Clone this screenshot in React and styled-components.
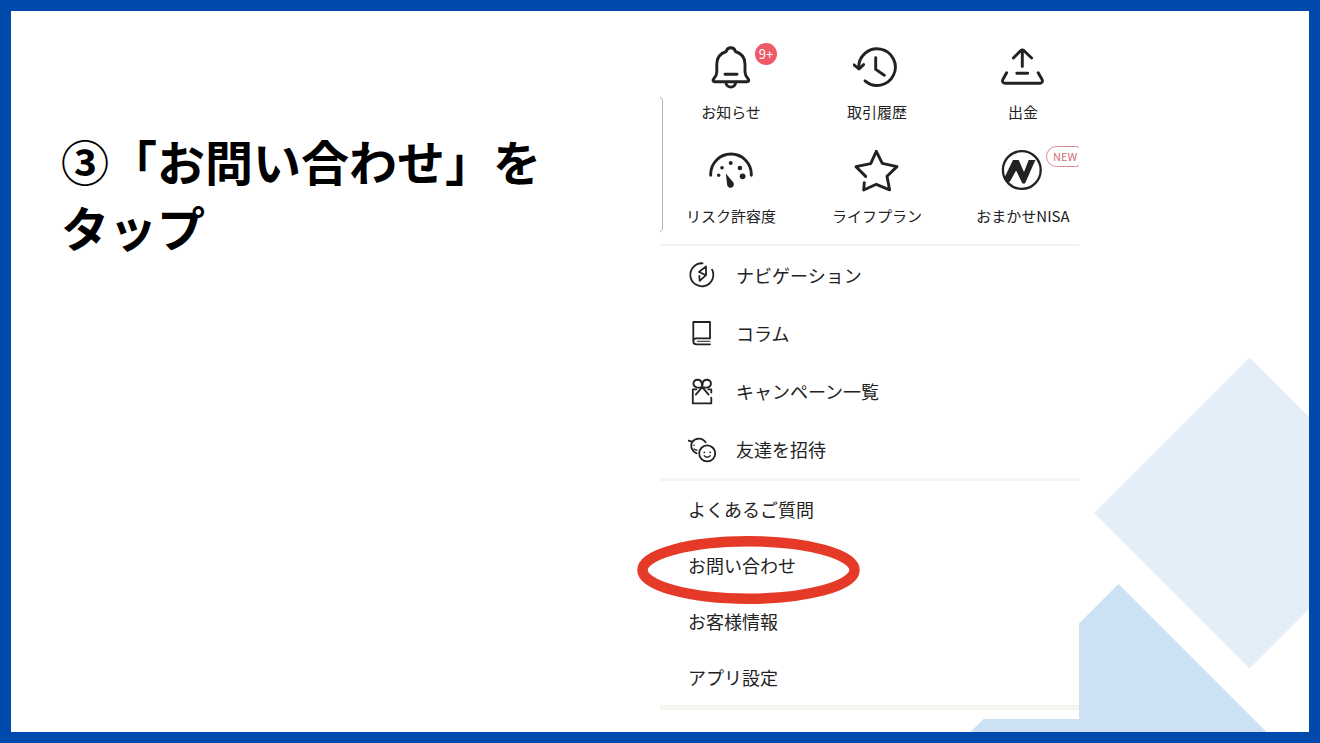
import React from "react";
import styled, { createGlobalStyle } from "styled-components";

const GlobalStyle = createGlobalStyle`
  *, *::before, *::after { box-sizing: border-box; }
  body {
    margin: 0;
    background: #ffffff;
    color: #222222;
    font-family: "Noto Sans CJK JP", "Noto Sans", sans-serif;
  }
`;

const Slide = styled.main`
  position: relative;
  display: grid;
  grid-template-columns: 1fr 1fr;
  min-height: 100vh;
  border: 11px solid #004aad;
  background: #ffffff;
  overflow: hidden;
`;

const Decoration = styled.svg`
  position: absolute;
  right: 0;
  bottom: 0;
  width: 340px;
  height: 375px;
`;

const Intro = styled.section`
  padding: 116px 40px 0 50px;
`;

const Title = styled.h1`
  margin: 0;
  max-width: 500px;
  color: #000000;
  font-size: 48px;
  font-weight: 700;
  line-height: 66px;
`;

const MenuPanel = styled.section`
  position: relative;
  align-self: start;
  width: 100%;
  max-width: 419px;
  padding-bottom: 9px;
  background: #ffffff;
`;

const Shortcuts = styled.div`
  position: relative;
  overflow: hidden;
  padding: 32px 0 17px;
`;

const NeighbourCard = styled.div`
  position: absolute;
  top: 85px;
  left: -10px;
  width: 13px;
  height: 137px;
  border: 1px solid #b4b4b4;
  border-radius: 5px;
`;

const ShortcutGrid = styled.div`
  display: grid;
  grid-template-columns: repeat(3, 146px);
  row-gap: 24px;
  margin-left: -2px;
`;

const Shortcut = styled.button`
  display: flex;
  flex-direction: column;
  align-items: center;
  gap: 10px;
  padding: 0;
  border: 0;
  background: none;
  color: inherit;
  font-family: inherit;
  font-size: 15px;
  line-height: 22px;
  white-space: nowrap;
  cursor: pointer;
`;

const ShortcutIcon = styled.span`
  position: relative;
  width: 48px;
  height: 48px;
`;

const CountBadge = styled.span`
  position: absolute;
  top: 0;
  left: 48px;
  width: 22px;
  height: 22px;
  border-radius: 50%;
  background: #ef5a68;
  color: #ffffff;
  font-size: 13px;
  line-height: 22px;
  text-align: center;
`;

const NewBadge = styled.span`
  position: absolute;
  top: -1px;
  left: 47px;
  padding: 0 8px 0 6px;
  border: 1px solid #d98a90;
  border-radius: 11px;
  color: #cf7078;
  font-size: 11px;
  line-height: 19px;
`;

const Divider = styled.hr`
  height: ${({ $size }) => $size}px;
  margin: 0;
  border: 0;
  background: ${({ $color }) => $color};
`;

const MenuList = styled.ul`
  margin: 0;
  padding: 0;
  list-style: none;
`;

const MenuItem = styled.li`
  position: relative;
  padding-left: 28px;
`;

const MenuLink = styled.a`
  display: flex;
  align-items: center;
  gap: 20px;
  height: ${({ $height }) => $height}px;
  color: inherit;
  font-size: 18px;
  line-height: 28px;
  text-decoration: none;
`;

const Highlight = styled.svg`
  position: absolute;
  top: -1px;
  left: -23px;
  width: 223px;
  height: 68px;
  pointer-events: none;
`;

const LineIcon = styled.svg`
  display: block;
  flex: none;
  width: ${({ $size }) => $size}px;
  height: ${({ $size }) => $size}px;
  fill: none;
  stroke: #222222;
  stroke-width: ${({ $stroke }) => $stroke};
  stroke-linecap: round;
  stroke-linejoin: round;

  .solid {
    fill: #222222;
    stroke: none;
  }
`;

const LargeIcon = ({ children }) => (
  <LineIcon $size={48} $stroke={2.9} viewBox="0 0 48 48" aria-hidden="true">
    {children}
  </LineIcon>
);

const SmallIcon = ({ children }) => (
  <LineIcon $size={28} $stroke={1.8} viewBox="0 0 28 28" aria-hidden="true">
    {children}
  </LineIcon>
);

const shortcuts = [
  {
    label: "お知らせ",
    badge: <CountBadge>9+</CountBadge>,
    icon: (
      <>
        <path d="M19.2 8.5A4.7 4.7 0 0 1 28.4 8.5C34.5 10.4 38 15 38 21V29C38 32 39.3 33.8 41.2 36C42.4 37.5 41.7 38.7 40 38.7H7.8C6.1 38.7 5.4 37.5 6.6 36C8.5 33.8 9.8 32 9.8 29V21C9.8 15 13.2 10.4 19.2 8.5Z" />
        <path d="M19 39.5A4.8 4.6 0 0 0 28.6 39.5M18 31.3H30" />
      </>
    ),
  },
  {
    label: "取引履歴",
    icon: (
      <>
        <path d="M5.8 25.4A18.3 18.3 0 1 1 12 37.9" />
        <path d="M.9 21.8L6 26L10.6 21.6M22.7 14.8V26.4L31.3 32.3" />
      </>
    ),
  },
  {
    label: "出金",
    icon: (
      <>
        <path d="M23.3 7V23.6M14.4 15L21.6 7.7Q23.3 6.2 25 7.7L32.6 15" />
        <path d="M17.8 30.3H28.7M7.6 29.8L4 36.2C2.8 38.5 4 40.3 6.2 40.3H40.8C43 40.3 44.1 38.5 42.9 36.2L39.2 29.8" />
      </>
    ),
  },
  {
    label: "リスク許容度",
    icon: (
      <>
        <path d="M3.7 28.3V27.3A20.3 20.3 0 0 1 44.3 27.3V28.3" />
        <g className="solid">
          <circle cx="11.7" cy="28.3" r="1.7" />
          <circle cx="15" cy="20.8" r="1.8" />
          <circle cx="23.7" cy="16" r="2" />
          <circle cx="32.9" cy="21" r="2.3" />
          <circle cx="35.6" cy="29.3" r="2.9" />
          <path d="M18.8 26.6L26.2 35.3A3.4 3.4 0 1 1 20.2 38.2Z" />
        </g>
      </>
    ),
  },
  {
    label: "ライフプラン",
    icon: (
      <path d="M12.7 29.4L3 19.7L17.7 16.6L23.3 4.3L29.3 16.3L44 19.6L34 29.3L36.6 42.8L23.3 37.3L10.7 43L11.3 35.6" />
    ),
  },
  {
    label: "おまかせNISA",
    badge: <NewBadge>NEW</NewBadge>,
    icon: (
      <>
        <circle cx="22.8" cy="23" r="18.9" strokeWidth="2.3" />
        <path
          className="solid"
          d="M5 31.5L14 13H19.7L25 25L29.7 13H36.4L26 36.6H23.4L17.1 23.4L11 34.5L8.2 36Z"
        />
      </>
    ),
  },
];

const serviceLinks = [
  {
    label: "ナビゲーション",
    icon: (
      <>
        <path d="M14.6 2.3A11.5 11.5 0 1 0 24.1 8.6" />
        <path d="M18 5.4L11 11L18 14.2ZM18 14.2L11.7 19.8L11.3 15" />
      </>
    ),
  },
  {
    label: "コラム",
    icon: (
      <>
        <path d="M22 19.4V3H5.3V22.4A3 3 0 0 0 8.3 25.3H22M5.3 22.4A3 3 0 0 1 8.3 19.4H22" />
        <path d="M9.3 22.3H22" strokeWidth="1" />
      </>
    ),
  },
  {
    label: "キャンペーン一覧",
    icon: (
      <>
        <path d="M14.2 10.2C10.5 11.4 5.4 10.5 5.4 6.4A4.2 4.2 0 0 1 13.7 6.2C13.8 7.8 14 9 14.2 10.2C17.9 11.4 23 10.5 23 6.4A4.2 4.2 0 0 0 14.7 6.2C14.6 7.8 14.4 9 14.2 10.2L7.8 17.6M14.2 10.2L20.6 17.6" />
        <path d="M8.3 12.4H4.8V26.3H23.3V20.6M20.2 12.4H23.3V15.6" />
      </>
    ),
  },
  {
    label: "友達を招待",
    icon: (
      <>
        <circle cx="19.2" cy="18.4" r="8" />
        <path d="M.6 5.6L4.3 6.9M8.6 18.3A8 8 0 0 1 4.3 6.9A8 8 0 0 1 17.6 7.4" />
        <path d="M16.2 20.8Q19.2 23.8 22.2 20.8M6.2 14Q7.6 15.2 9 15" strokeWidth="1.3" />
        <g className="solid">
          <circle cx="16.3" cy="17.3" r=".9" />
          <circle cx="22.2" cy="17.3" r=".9" />
          <circle cx="6" cy="10.2" r=".8" />
        </g>
      </>
    ),
  },
];

const supportLinks = [
  { label: "よくあるご質問" },
  { label: "お問い合わせ", highlighted: true },
  { label: "お客様情報" },
  { label: "アプリ設定" },
];

export default function App() {
  return (
    <>
      <GlobalStyle />
      <Slide>
        <Decoration viewBox="969 357 340 375" aria-hidden="true">
          <path d="M1249.500 357.500L1405 513L1249.500 668.500L1094 513Z" fill="#e3eef8" />
          <path d="M1118.500 584L1268.500 734H968.500Z" fill="#cde1f5" />
        </Decoration>

        <Intro>
          <Title>③「お問い合わせ」をタップ</Title>
        </Intro>

        <MenuPanel>
          <Shortcuts>
            <NeighbourCard />
            <ShortcutGrid>
              {shortcuts.map(({ label, icon, badge }) => (
                <Shortcut key={label} type="button">
                  <ShortcutIcon>
                    <LargeIcon>{icon}</LargeIcon>
                    {badge}
                  </ShortcutIcon>
                  {label}
                </Shortcut>
              ))}
            </ShortcutGrid>
          </Shortcuts>

          <Divider $size={2} $color="#f3f3f3" />

          <MenuList>
            {serviceLinks.map(({ label, icon }) => (
              <MenuItem key={label}>
                <MenuLink href="#" $height={58}>
                  <SmallIcon>{icon}</SmallIcon>
                  {label}
                </MenuLink>
              </MenuItem>
            ))}
          </MenuList>

          <Divider $size={3} $color="#f4f4f4" />

          <MenuList>
            {supportLinks.map(({ label, highlighted }) => (
              <MenuItem key={label}>
                <MenuLink href="#" $height={56}>
                  {label}
                </MenuLink>
                {highlighted && (
                  <Highlight viewBox="0 0 223 68" aria-hidden="true">
                    <ellipse
                      cx="111.5"
                      cy="34"
                      rx="106"
                      ry="28.7"
                      fill="none"
                      stroke="#e63a28"
                      strokeWidth="10.5"
                    />
                  </Highlight>
                )}
              </MenuItem>
            ))}
          </MenuList>

          <Divider $size={5} $color="#f5f5f0" />
        </MenuPanel>
      </Slide>
    </>
  );
}
